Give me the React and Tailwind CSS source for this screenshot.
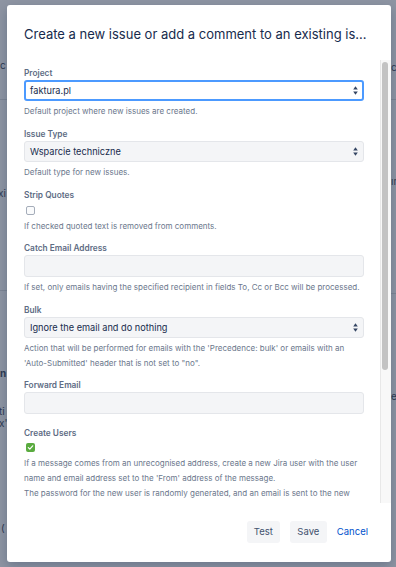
import React from "react";

const FONT = { fontFamily: "Inter, 'Noto Sans', sans-serif" };

function Arrows() {
  return (
    <svg width="5" height="9" viewBox="0 0 5 9" className="shrink-0">
      <path d="M2.5 0.3 L4.8 3.6 H0.2 Z" fill="#344563" />
      <path d="M2.5 8.7 L4.8 5.4 H0.2 Z" fill="#344563" />
    </svg>
  );
}

function Label({ children, className = "" }) {
  return (
    <div className={"text-[8.3px] leading-[13px] h-[13px] font-semibold text-[#5e6c84] " + className}>
      {children}
    </div>
  );
}

function Help({ children, className = "mt-[3px]" }) {
  return (
    <div className={"text-[8px] leading-[15px] text-[#6b778c] whitespace-nowrap " + className}>
      {children}
    </div>
  );
}

function Select({ value, focused }) {
  return (
    <div
      className={
        "w-[340px] h-[21px] rounded-[3px] flex items-center justify-between " +
        (focused
          ? "border-2 border-[#4c9aff] bg-white pl-[4px] pr-[4px]"
          : "border border-[#e4e6ea] bg-[#f4f5f7] pl-[5px] pr-[5px]")
      }
    >
      <span className="text-[9.2px] text-[#172b4d]">{value}</span>
      <Arrows />
    </div>
  );
}

function Input() {
  return <div className="w-[340px] h-[22px] rounded-[3px] border border-[#e4e6ea] bg-[#f4f5f7]" />;
}

function Checkbox({ checked }) {
  return checked ? (
    <div className="ml-[2px] w-[9px] h-[9px] rounded-[2px] bg-[#5aab3f] flex items-center justify-center">
      <svg width="7" height="7" viewBox="0 0 7 7">
        <path d="M1.3 3.6 L2.8 5.1 L5.7 1.8" stroke="white" strokeWidth="1.2" fill="none" strokeLinecap="round" strokeLinejoin="round" />
      </svg>
    </div>
  ) : (
    <div className="ml-[2px] w-[9px] h-[9px] rounded-[2px] border border-[#a5adba] bg-[#fafbfc]" />
  );
}

export default function App() {
  return (
    <div className="relative w-[396px] h-[567px] overflow-hidden bg-[#8e95a3]" style={FONT}>
      {/* page behind the blanket (covered by the dialog) */}
      <div className="absolute inset-0 text-[10px] text-[#2e3a52]">
        <div className="absolute left-0 top-[58px]">c</div>
        <div className="absolute left-0 top-[99px] w-[7px] h-px bg-[#7d8594]" />
        <div className="absolute left-[-2px] top-[186px]">xi</div>
        <div className="absolute left-0 top-[290px] w-[7px] h-px bg-[#7d8594]" />
        <div className="absolute left-0 top-[366px] font-bold">n</div>
        <div className="absolute left-[-1px] top-[404px]">ti</div>
        <div className="absolute left-[-1px] top-[416px]">x'.</div>
        <div className="absolute left-[1px] top-[521px]">(</div>
        <div className="absolute left-[391px] top-[60px]">c</div>
        <div className="absolute left-[391px] top-[99px] w-[7px] h-px bg-[#7d8594]" />
        <div className="absolute left-[391px] top-[174px]">ır</div>
        <div className="absolute left-[391px] top-[293px] w-[7px] h-px bg-[#7d8594]" />
        <div className="absolute left-[391px] top-[389px]">e</div>
      </div>

      {/* dialog */}
      <div className="relative ml-[7px] mt-[5px] w-[384px] h-[557px] bg-white rounded-[3px] shadow-[0_4px_12px_rgba(9,30,66,0.25)] flex flex-col">
        <div className="h-[55px] shrink-0 pl-[17px] pt-[19px]">
          <div className="text-[13px] leading-[20px] text-[#172b4d] whitespace-nowrap">
            Create a new issue or add a comment to an existing is…
          </div>
        </div>

        <div className="h-[443px] shrink-0 flex">
          <div className="flex-1 overflow-hidden pl-[17px] pt-[7px]">
            <Label>Project</Label>
            <Select value="faktura.pl" focused />
            <Help>Default project where new issues are created.</Help>

            <Label className="mt-[9px]">Issue Type</Label>
            <Select value="Wsparcie techniczne" />
            <Help>Default type for new issues.</Help>

            <Label className="mt-[9px]">Strip Quotes</Label>
            <div className="mt-[4px]">
              <Checkbox />
            </div>
            <Help className="mt-[4px]">If checked quoted text is removed from comments.</Help>

            <Label className="mt-[8px]">Catch Email Address</Label>
            <Input />
            <Help>If set, only emails having the specified recipient in fields To, Cc or Bcc will be processed.</Help>

            <Label className="mt-[9px]">Bulk</Label>
            <Select value="Ignore the email and do nothing" />
            <Help>
              Action that will be performed for emails with the 'Precedence: bulk' or emails with an
              <br />
              'Auto-Submitted' header that is not set to "no".
            </Help>

            <Label className="mt-[8px]">Forward Email</Label>
            <Input />

            <Label className="mt-[13px]">Create Users</Label>
            <div className="mt-[3px]">
              <Checkbox checked />
            </div>
            <Help className="mt-[4px]">
              If a message comes from an unrecognised address, create a new Jira user with the user
              <br />
              name and email address set to the 'From' address of the message.
              <br />
              The password for the new user is randomly generated, and an email is sent to the new
              <br />
              user informing them about their new account.
            </Help>

            <Label className="mt-[9px]">Notify Users</Label>
            <div className="mt-[3px]">
              <Checkbox checked />
            </div>
            <Help className="mt-[4px]">Uncheck this if you do not want to notify the created users.</Help>
          </div>

          <div className="w-[11px] shrink-0 border-l border-[#e8e8e8] bg-[#f8f8f8] pl-[1px] pt-[2px]">
            <div className="w-[6px] h-[308px] rounded-full bg-[#c3c3c3]" />
          </div>
        </div>

        <div className="flex-1 flex items-start justify-end pt-[18px] pr-[23px] gap-[10px]">
          <button className="h-[22px] px-[7px] rounded-[3px] bg-[#f4f5f7] text-[9.5px] text-[#42526e]">Test</button>
          <button className="h-[22px] px-[7.5px] rounded-[3px] bg-[#f4f5f7] text-[9.5px] text-[#42526e]">Save</button>
          <button className="h-[22px] text-[9.5px] text-[#0052cc]">Cancel</button>
        </div>
      </div>
    </div>
  );
}
